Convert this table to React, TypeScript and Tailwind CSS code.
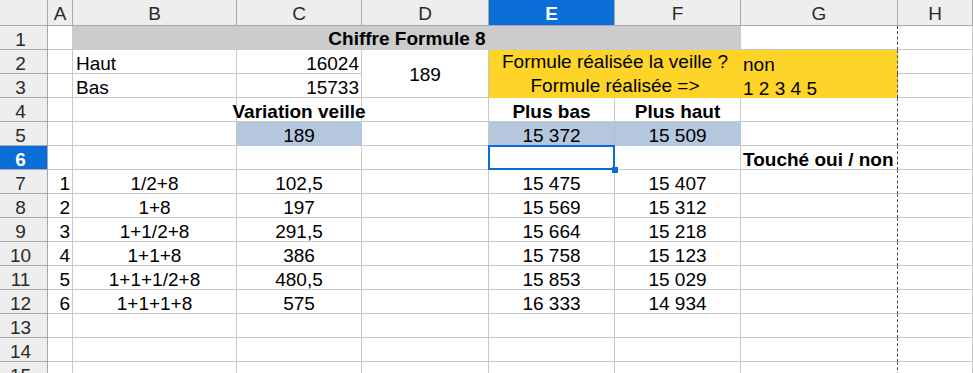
import type { ReactNode } from 'react'

const line = 'border-r border-b border-[#c8c8c8]'
const txt = 'flex items-end leading-[18px] whitespace-nowrap'
const pageBreak = '[border-right-style:dashed] border-r-[#4a4a4a]'

function Cell({ children, className = '' }: { children?: ReactNode; className?: string }) {
  return <div className={`${txt} ${className}`}>{children}</div>
}

function ColHead({ label, active = false }: { label: string; active?: boolean }) {
  return (
    <div
      className={`flex items-end justify-center pb-[2px] leading-[18px] border-r border-b border-[#a8a8a8] ${
        active ? 'bg-[#0b6ed7] text-white font-bold' : 'bg-[#eeeeee] text-[#2a2a2a]'
      }`}
    >
      {label}
    </div>
  )
}

function RowHead({ n, active = false }: { n: number; active?: boolean }) {
  return (
    <div
      className={`flex items-end justify-center pr-[6px] leading-[18px] border-r border-b border-[#a8a8a8] ${
        active ? 'bg-[#0b6ed7] text-white font-bold' : 'bg-[#eeeeee] text-[#2a2a2a]'
      }`}
    >
      {n}
    </div>
  )
}

const steps = [
  ['1', '1/2+8', '102,5', '15 475', '15 407'],
  ['2', '1+8', '197', '15 569', '15 312'],
  ['3', '1+1/2+8', '291,5', '15 664', '15 218'],
  ['4', '1+1+8', '386', '15 758', '15 123'],
  ['5', '1+1+1/2+8', '480,5', '15 853', '15 029'],
  ['6', '1+1+1+8', '575', '16 333', '14 934'],
]

export default function App() {
  return (
    <div className="w-[973px] h-[373px] overflow-hidden bg-white text-black text-[19px] font-['Liberation_Sans',Arial,sans-serif]">
      <div className="grid grid-cols-[48px_25px_164px_125px_127px_126px_126px_157px_1fr] grid-rows-[26px_repeat(15,24px)]">
        {/* column headers */}
        <div className="bg-[#eeeeee] border-r border-b border-[#a8a8a8]" />
        <ColHead label="A" />
        <ColHead label="B" />
        <ColHead label="C" />
        <ColHead label="D" />
        <ColHead label="E" active />
        <ColHead label="F" />
        <ColHead label="G" />
        <ColHead label="H" />

        {/* row 1 */}
        <RowHead n={1} />
        <Cell className={line} />
        <Cell className="col-span-5 bg-[#cccccc] justify-center pb-[2px] font-bold">Chiffre Formule 8</Cell>
        <Cell className={`${line} ${pageBreak}`} />
        <Cell className={line} />

        {/* row 2 */}
        <RowHead n={2} />
        <Cell className={line} />
        <Cell className={`${line} pl-[3px]`}>Haut</Cell>
        <Cell className={`${line} justify-end pr-[2px]`}>16024</Cell>
        <Cell className={`${line} row-span-2 !items-center justify-center pt-[3px]`}>189</Cell>
        <Cell className="col-span-2 bg-[#ffd428] justify-center pb-[3px]">Formule réalisée la veille ?</Cell>
        <Cell className={`bg-[#ffd428] border-r ${pageBreak} pl-[2px]`}>non</Cell>
        <Cell className={line} />

        {/* row 3 */}
        <RowHead n={3} />
        <Cell className={line} />
        <Cell className={`${line} pl-[3px]`}>Bas</Cell>
        <Cell className={`${line} justify-end pr-[2px]`}>15733</Cell>
        <Cell className="col-span-2 bg-[#ffd428] justify-center pb-[3px]">Formule réalisée =&gt;</Cell>
        <Cell className={`bg-[#ffd428] border-r ${pageBreak} pl-[2px]`}>1 2 3 4 5</Cell>
        <Cell className={line} />

        {/* row 4 */}
        <RowHead n={4} />
        <Cell className={line} />
        <Cell className={line} />
        <Cell className={`${line} justify-center font-bold`}>Variation veille</Cell>
        <Cell className={line} />
        <Cell className={`${line} justify-center font-bold`}>Plus bas</Cell>
        <Cell className={`${line} justify-center font-bold`}>Plus haut</Cell>
        <Cell className={`${line} ${pageBreak}`} />
        <Cell className={line} />

        {/* row 5 */}
        <RowHead n={5} />
        <Cell className={line} />
        <Cell className={line} />
        <Cell className="border-r border-b border-[#b4c7dc] bg-[#b4c7dc] justify-center">189</Cell>
        <Cell className={line} />
        <Cell className="border-r border-b border-r-[#a9bdd3] border-b-[#b4c7dc] bg-[#b4c7dc] justify-center">15 372</Cell>
        <Cell className="border-r border-b border-[#b4c7dc] bg-[#b4c7dc] justify-center">15 509</Cell>
        <Cell className={`${line} ${pageBreak}`} />
        <Cell className={line} />

        {/* row 6 */}
        <RowHead n={6} active />
        <Cell className={line} />
        <Cell className={line} />
        <Cell className={line} />
        <Cell className={line} />
        <div className={`${line} relative`}>
          <div className="absolute -left-px -top-px -right-px -bottom-px border-2 border-[#0b6ed7] z-10" />
          <div className="absolute right-[-4px] bottom-[-4px] w-[6px] h-[6px] bg-[#0b6ed7] z-20" />
        </div>
        <Cell className={line} />
        <Cell className={`${line} ${pageBreak} pl-[2px] font-bold`}>Touché oui / non</Cell>
        <Cell className={line} />

        {/* rows 7-12 */}
        {steps.map((s, i) => (
          <div key={s[0]} className="contents">
            <RowHead n={7 + i} />
            <Cell className={`${line} justify-end pr-[2px]`}>{s[0]}</Cell>
            <Cell className={`${line} justify-center`}>{s[1]}</Cell>
            <Cell className={`${line} justify-center`}>{s[2]}</Cell>
            <Cell className={line} />
            <Cell className={`${line} justify-center`}>{s[3]}</Cell>
            <Cell className={`${line} justify-center`}>{s[4]}</Cell>
            <Cell className={`${line} ${pageBreak}`} />
            <Cell className={line} />
          </div>
        ))}

        {/* rows 13-15 */}
        {[13, 14, 15].map(n => (
          <div key={n} className="contents">
            <RowHead n={n} />
            <Cell className={line} />
            <Cell className={line} />
            <Cell className={line} />
            <Cell className={line} />
            <Cell className={line} />
            <Cell className={line} />
            <Cell className={`${line} ${pageBreak}`} />
            <Cell className={line} />
          </div>
        ))}
      </div>
    </div>
  )
}
